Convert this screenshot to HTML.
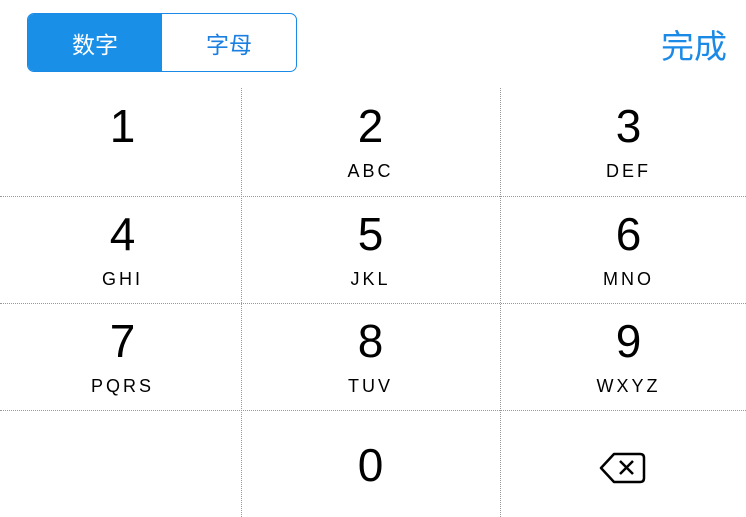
<!DOCTYPE html>
<html><head><meta charset="utf-8"><style>
body{margin:0;width:746px;height:517px;background:#fff;position:relative;overflow:hidden;font-family:"Liberation Sans","Noto Sans CJK SC",sans-serif}
.seg{position:absolute;left:27px;top:13px;width:268px;height:57px;border:1.5px solid #1a8ae6;border-radius:7px;overflow:hidden;display:flex}
.seg div{flex:1;display:flex;align-items:center;justify-content:center;font-size:23px}
.a{background:#1a8fe8;color:#fff}.b{color:#1a7fe0}
.done{position:absolute;left:661px;top:20px;font-size:33px;color:#1a8ae6}
.v{position:absolute;top:88px;bottom:0;width:0;border-left:1px dotted #999}
.h{position:absolute;left:0;right:0;height:0;border-top:1px dotted #999}
.k{position:absolute;width:241px;text-align:center;color:#000}
.d{font-size:46px;line-height:46px}
.l{font-size:18px;letter-spacing:3px;margin-top:12px}
</style></head><body>
<div class="seg"><div class="a">数字</div><div class="b">字母</div></div>
<div class="done">完成</div>
<div class="v" style="left:241px"></div><div class="v" style="left:500px"></div>
<div class="h" style="top:196px"></div><div class="h" style="top:303px"></div><div class="h" style="top:410px"></div>
<div class="k" style="left:2px;top:103px"><div class="d">1</div></div>
<div class="k" style="left:250px;top:103px"><div class="d">2</div><div class="l">ABC</div></div>
<div class="k" style="left:508px;top:103px"><div class="d">3</div><div class="l">DEF</div></div>
<div class="k" style="left:2px;top:211px"><div class="d">4</div><div class="l">GHI</div></div>
<div class="k" style="left:250px;top:211px"><div class="d">5</div><div class="l">JKL</div></div>
<div class="k" style="left:508px;top:211px"><div class="d">6</div><div class="l">MNO</div></div>
<div class="k" style="left:2px;top:318px"><div class="d">7</div><div class="l">PQRS</div></div>
<div class="k" style="left:250px;top:318px"><div class="d">8</div><div class="l">TUV</div></div>
<div class="k" style="left:508px;top:318px"><div class="d">9</div><div class="l">WXYZ</div></div>
<div class="k" style="left:250px;top:442px"><div class="d">0</div></div>
<svg style="position:absolute;left:598px;top:450px" width="50" height="36" viewBox="0 0 50 36">
<path d="M3 18 L16 4 H42 Q46 4 46 8 V28 Q46 32 42 32 H16 Z" fill="none" stroke="#000" stroke-width="2.5" stroke-linejoin="round"/>
<path d="M22 11 L35 24 M35 11 L22 24" stroke="#000" stroke-width="2.5"/>
</svg>
</body></html>
